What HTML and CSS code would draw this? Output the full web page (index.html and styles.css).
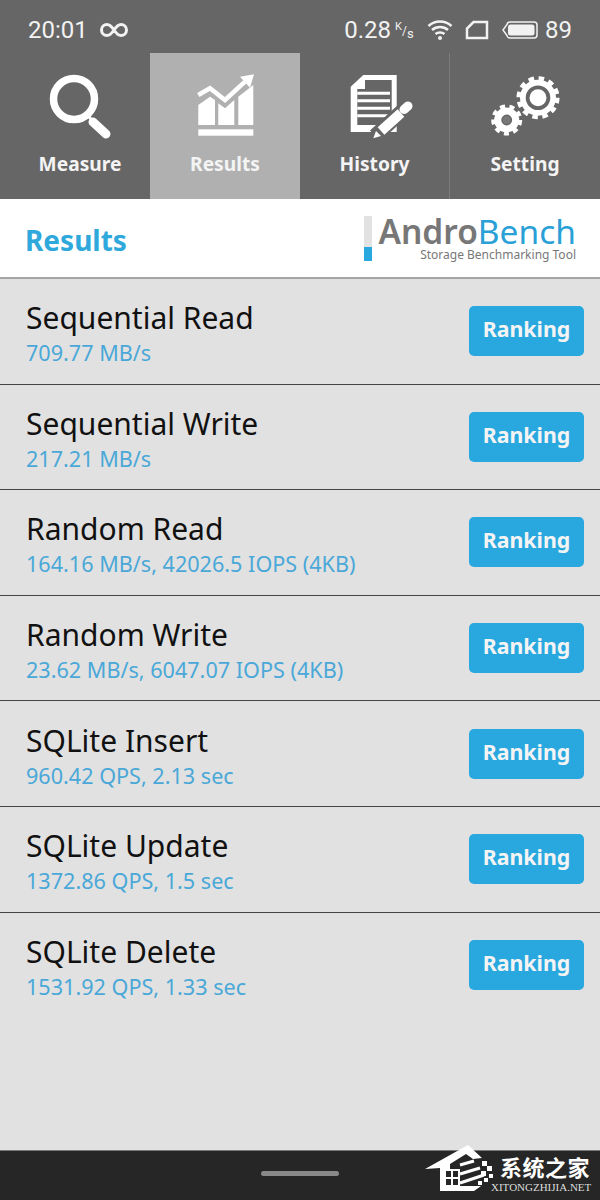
FILE: index.html
```html
<!DOCTYPE html>
<html lang="en">
<head>
<meta charset="utf-8">
<title>AndroBench Results</title>
<link rel="stylesheet" href="styles.css">
</head>
<body>
<div class="phone">
  <header class="top">
    <div class="status">
      <span class="time">20:01</span>
      <svg class="ic-inf" viewBox="0 0 28 16"><path d="M14 8C11 3.500 9 2.500 7 2.500a5.500 5.500 0 0 0 0 11c2 0 4-1 7-5.500s5-5.500 7-5.500a5.500 5.500 0 0 1 0 11c-2 0-4-1-7-5.500z"/></svg>
      <span class="spacer"></span>
      <span class="speed">0.28</span>
      <span class="unit"><sup>K</sup>/<sub>s</sub></span>
      <svg class="ic-wifi" viewBox="0 0 26 22"><path d="M1.500 7C8 1 18 1 24.500 7M5 11c4.500-4 11.500-4 16 0M8.500 15c2.500-2 6.500-2 9 0"/><circle cx="13" cy="19" r="2"/></svg>
      <svg class="ic-sim" viewBox="0 0 24 20"><path d="M8.500 2H22v16H2V8.500z"/></svg>
      <svg class="ic-bat" viewBox="0 0 38 20"><path class="bat-o" d="M9 2h24a3 3 0 0 1 3 3v10a3 3 0 0 1-3 3H9a3 3 0 0 1-3-2.500L2 10l4-5.500A3 3 0 0 1 9 2z"/><rect x="7" y="4.500" width="26.500" height="11" rx="2.500"/></svg>
      <span class="batt">89</span>
    </div>
    <nav class="tabs">
      <div class="tab first">
        <svg class="tab-ic" viewBox="0 0 80 70"><circle class="s7" cx="39" cy="27" r="20.500"/><path class="s3" d="M52 43l6 6"/><path class="s9" d="M58 50l13 12"/></svg>
        <span class="tab-label">Measure</span>
      </div>
      <div class="tab active">
        <svg class="tab-ic" viewBox="0 0 80 70"><rect class="f" x="13.300" y="57.300" width="55" height="6.400"/><path class="f" d="M13.300 33L25 24.700 30 28V53H13.300zM33.300 31.300L40 36.300 49.300 28V53H33.300zM53.300 24.700L68.300 13V53H53.300z"/><path class="lc" d="M13.300 23L25 16.300 40 28 60 9.700"/><path class="f" d="M55 4.700L69 2.300 65 15.700z"/></svg>
        <span class="tab-label">Results</span>
      </div>
      <div class="tab">
        <svg class="tab-ic" viewBox="0 0 80 70"><path class="f" d="M28.300 3H61.700V60H15.700V14.700z"/><path class="doc" d="M30 8H56.700V53H22.300V17H30z"/><path class="s3" d="M22.300 21.300H55M22.300 28.700H55M22.300 36.300H55M22.300 43.700H55"/><path class="pen-gap" d="M40 64L74 33"/><path class="pen" d="M46 59L66 41"/><path class="pen-cap" d="M69 37.500L73 34"/><path class="f" d="M38.300 66.300L41 59 46 64z"/></svg>
        <span class="tab-label">History</span>
      </div>
      <div class="tab">
        <svg class="tab-ic" viewBox="0 0 80 70"><circle class="teeth-b" cx="53" cy="25.700" r="19.300"/><circle class="f" cx="53" cy="25.700" r="18"/><circle class="hole" cx="53" cy="25.700" r="10.400"/><circle class="teeth-s" cx="21.700" cy="48" r="13.500"/><circle class="f" cx="21.700" cy="48" r="12.500"/><circle class="hole-s" cx="21.700" cy="48" r="4.700"/></svg>
        <span class="tab-label">Setting</span>
      </div>
    </nav>
  </header>

  <section class="head">
    <h1 class="title">Results</h1>
    <div class="logo">
      <div class="logo-bar"><span></span></div>
      <div class="logo-text">
        <div class="logo-name"><b>Andro</b><span>Bench</span></div>
        <div class="logo-sub">Storage Benchmarking Tool</div>
      </div>
    </div>
  </section>

  <main class="list">
    <div class="row"><div class="info"><div class="name">Sequential Read</div><div class="val">709.77 MB/s</div></div><button class="btn">Ranking</button></div>
    <div class="row"><div class="info"><div class="name">Sequential Write</div><div class="val">217.21 MB/s</div></div><button class="btn">Ranking</button></div>
    <div class="row"><div class="info"><div class="name">Random Read</div><div class="val">164.16 MB/s, 42026.5 IOPS (4KB)</div></div><button class="btn">Ranking</button></div>
    <div class="row"><div class="info"><div class="name">Random Write</div><div class="val">23.62 MB/s, 6047.07 IOPS (4KB)</div></div><button class="btn">Ranking</button></div>
    <div class="row"><div class="info"><div class="name">SQLite Insert</div><div class="val">960.42 QPS, 2.13 sec</div></div><button class="btn">Ranking</button></div>
    <div class="row"><div class="info"><div class="name">SQLite Update</div><div class="val">1372.86 QPS, 1.5 sec</div></div><button class="btn">Ranking</button></div>
    <div class="row last"><div class="info"><div class="name">SQLite Delete</div><div class="val">1531.92 QPS, 1.33 sec</div></div><button class="btn">Ranking</button></div>
  </main>

  <footer class="nav"><span class="pill"></span></footer>

  <div class="wm">
    <svg class="wm-house" viewBox="0 0 72 48"><path class="f" d="M1 24L44 0 58 13 49 14 42 9 26 19V41H57L50 46H16V23z"/><path class="wm-d" d="M21 25h14v16H21zM28 25v16M21 33h14"/><path class="wm-w" d="M36 20l14-4M36 29l20-6M36 38l24-8"/><path class="wm-dot" d="M58 16h5v5h-5zM63 21h5v5h-5zM57 26h5v5h-5zM65 29h4v4h-4zM60 33h4v4h-4zM54 36h4v4h-4z"/></svg>
    <div class="wm-text">
      <div class="wm-cn">系统之家</div>
      <div class="wm-en">XITONGZHIJIA.NET</div>
    </div>
  </div>
</div>
</body>
</html>
```

FILE: styles.css
```css
* { box-sizing: border-box; }
html, body { margin: 0; padding: 0; }
body { width: 600px; height: 1200px; overflow: hidden; font-family: "Noto Sans", "Open Sans", sans-serif; }
.phone { position: relative; width: 600px; height: 1200px; display: flex; flex-direction: column; background: #e1e1e1; }

.top { height: 199px; background: #666; color: #f2f2f2; flex: none; }
.status { height: 53px; display: flex; align-items: center; padding: 7px 28px 0; font-family: Roboto, sans-serif; font-size: 24px; }
.time { width: 57px; }
.ic-inf { width: 28px; height: 16px; margin-left: 15px; fill: none; stroke: #f2f2f2; stroke-width: 3; }
.spacer { flex: 1; }
.speed { margin-right: 4px; }
.unit { font-size: 12px; width: 21px; white-space: nowrap; line-height: 1; }
.unit sup { font-size: 11px; vertical-align: 5px; }
.unit sub { font-size: 13px; vertical-align: -3px; }
.ic-wifi { width: 26px; height: 22px; margin-left: 11px; fill: #f2f2f2; }
.ic-wifi path { fill: none; stroke: #f2f2f2; stroke-width: 2.600; }
.ic-sim { width: 24px; height: 20px; margin-left: 12px; fill: none; stroke: #f2f2f2; stroke-width: 2.500; }
.ic-bat { width: 38px; height: 20px; margin-left: 12px; fill: #f2f2f2; }
.bat-o { fill: none; stroke: #f2f2f2; stroke-width: 1.500; }
.batt { margin-left: 6px; }

.tabs { height: 146px; display: grid; grid-template-columns: repeat(4, 150px); }
.tab { display: flex; flex-direction: column; align-items: center; padding-top: 19px; border-right: 1px solid #7c7c7c; }
.tab.first, .tab:last-child { border-right: 0; }
.tab.first .tab-label { padding-left: 10px; }
.tab.active { background: #b0b0b0; border-right: 0; }
.tab-ic { width: 80px; height: 70px; fill: none; flex: none; }
.tab-label { margin-top: 7px; font-size: 19.200px; line-height: 30px; font-weight: 700; color: #f4f4f4; }
.f { fill: #fff; stroke: none; }
.s7 { stroke: #fff; stroke-width: 7.500; }
.s3 { stroke: #fff; stroke-width: 3; }
.s9 { stroke: #fff; stroke-width: 9; stroke-linecap: round; }
.lc { stroke: #fff; stroke-width: 4.500; fill: none; }
.doc { fill: #666; }
.pen { stroke: #fff; stroke-width: 10; }
.pen-cap { stroke: #fff; stroke-width: 9; stroke-linecap: round; }
.pen-gap { stroke: #666; stroke-width: 15; }
.teeth-b { fill: none; stroke: #fff; stroke-width: 4.500; stroke-dasharray: 5.500 4.610; }
.teeth-s { fill: none; stroke: #fff; stroke-width: 4; stroke-dasharray: 5 4.420; }
.hole { fill: #fff; stroke: #666; stroke-width: 3.800; }
.hole-s { fill: #777; stroke: #666; stroke-width: 1.500; }

.head { height: 80px; flex: none; background: #fff; border-bottom: 2px solid #a5a5a5; display: flex; justify-content: space-between; align-items: center; padding: 0 24px 0 25px; }
.title { margin: 3px 0 0; font-size: 28px; font-weight: 700; color: #2fa8dc; }
.logo { display: flex; gap: 6px; align-items: center; }
.logo-bar { width: 8px; height: 45px; background: #e2e2e2; display: flex; align-items: flex-end; }
.logo-bar span { display: block; width: 100%; height: 14px; background: #29a8e0; }
.logo-text { display: flex; flex-direction: column; align-items: flex-end; }
.logo-name { font-size: 33.500px; line-height: 34px; color: #29a0d6; white-space: nowrap; }
.logo-name b { font-weight: 600; color: #777; }
.logo-sub { font-size: 12px; line-height: 14px; color: #777; white-space: nowrap; }

.list { flex: 1; display: block; }
.row { height: 105.600px; display: flex; justify-content: space-between; align-items: center; padding: 0 16px 0 26px; border-bottom: 1.500px solid #444; }
.row.last { border-bottom: 0; }
.info { padding-top: 4px; }
.name { font-size: 30px; line-height: 36px; color: #111; }
.val { margin-top: 4px; font-size: 21.600px; line-height: 26px; color: #4aa8d8; }
.btn { width: 115px; height: 50px; border: 0; border-radius: 5px; background: #29a8e0; color: #f4f4f4; font-family: inherit; font-size: 21.300px; font-weight: 700; padding: 0 0 5px; }

.nav { height: 50px; flex: none; background: #262626; display: flex; justify-content: center; align-items: center; border-top: 1px solid #777; }
.pill { width: 78px; height: 5px; border-radius: 3px; background: #888; margin-top: -4px; }

.wm { position: absolute; left: 424px; top: 1145px; display: flex; align-items: flex-start; }
.wm-house { width: 72px; height: 48px; flex: none; }
.wm-d { fill: #262626; stroke: #fff; stroke-width: 2; }
.wm-w { fill: none; stroke: #fff; stroke-width: 3; }
.wm-dot { fill: #fff; }
.wm-text { margin-left: 4px; padding-top: 8px; }
.wm-cn { font-family: "Noto Sans CJK SC", sans-serif; font-weight: 700; font-size: 22px; line-height: 26px; color: #fff; letter-spacing: 0.500px; white-space: nowrap; }
.wm-en { font-family: "Liberation Serif", serif; font-size: 11px; line-height: 14px; margin-top: 1px; color: #ddd; white-space: nowrap; margin-left: -9px; }
```
